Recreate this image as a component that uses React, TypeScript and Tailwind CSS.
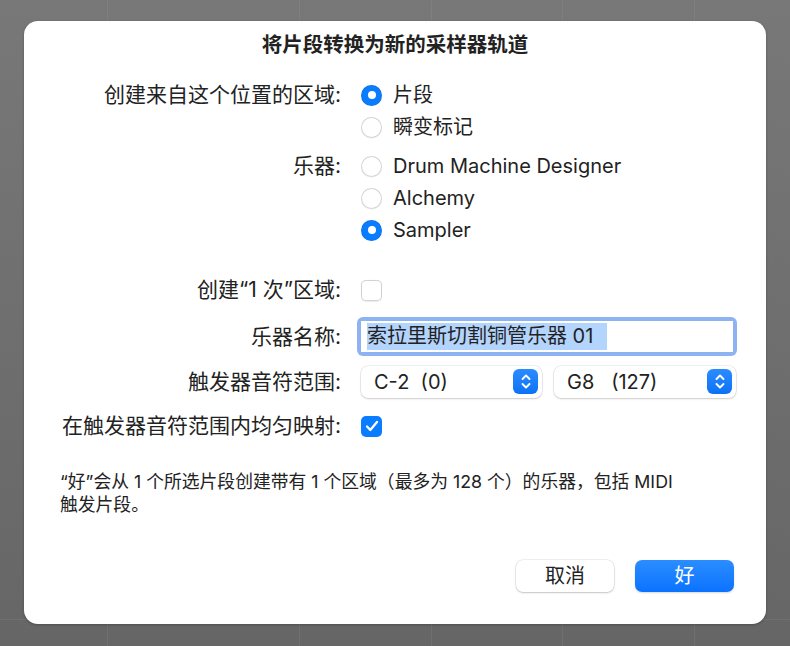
import React from "react";

const font = { fontFamily: '"Inter", "Noto Sans CJK SC", sans-serif' };

function Radio({ checked, label }: { checked?: boolean; label: string }) {
  return (
    <div className="flex h-[32px] items-center">
      {checked ? (
        <span className="flex h-[21px] w-[21px] items-center justify-center rounded-full bg-[#0a7cff] shadow-[inset_0_0_0_0.5px_rgba(0,0,0,0.15)]">
          <span className="h-[8px] w-[8px] rounded-full bg-white" />
        </span>
      ) : (
        <span className="h-[21px] w-[21px] rounded-full bg-white shadow-[inset_0_0_0_1px_#d4d4d4,0_0.5px_1px_rgba(0,0,0,0.08)]" />
      )}
      <span className="ml-[11px] text-[20px] text-[#222]">{label}</span>
    </div>
  );
}

function Label({ children }: { children: React.ReactNode }) {
  return <div className="w-[317px] shrink-0 text-right text-[21px] text-[#222]">{children}</div>;
}

function Stepper() {
  return (
    <span className="flex h-[25px] w-[25px] items-center justify-center rounded-[6px] bg-gradient-to-b from-[#2b8cff] to-[#0a72f5]">
      <svg width="12" height="17" viewBox="0 0 12 17" fill="none" stroke="white" strokeWidth="1.9" strokeLinecap="round" strokeLinejoin="round">
        <path d="M2.5 6 L6 2.5 L9.5 6" />
        <path d="M2.5 11 L6 14.5 L9.5 11" />
      </svg>
    </span>
  );
}

function Popup({ text, width }: { text: React.ReactNode; width: string }) {
  return (
    <div className={`flex h-[32px] ${width} items-center justify-between rounded-[7px] bg-white pl-[13px] pr-[4px] shadow-[0_0_0_0.5px_rgba(0,0,0,0.12),0_1px_2px_rgba(0,0,0,0.15)]`}>
      <span className="whitespace-pre text-[20px] text-[#222]">{text}</span>
      <Stepper />
    </div>
  );
}

export default function App() {
  return (
    <div
      className="relative flex h-[646px] w-[790px] flex-col overflow-hidden bg-gradient-to-b from-[#787878] to-[#666666] pt-[21px] pl-[24px]"
      style={font}
    >
      {/* faint background grid lines */}
      <div className="pointer-events-none absolute inset-0">
        <div className="absolute top-0 bottom-0 left-[107px] w-px bg-white/[0.06]" />
        <div className="absolute top-0 bottom-0 left-[299px] w-px bg-white/[0.06]" />
        <div className="absolute top-0 bottom-0 left-[431px] w-px bg-white/[0.06]" />
        <div className="absolute top-0 bottom-0 left-[562px] w-px bg-white/[0.06]" />
        <div className="absolute top-0 bottom-0 left-[694px] w-px bg-white/[0.06]" />
        <div className="absolute left-0 right-0 top-[619px] h-px bg-white/[0.06]" />
      </div>

      <div className="relative flex h-[603px] w-[742px] flex-col rounded-[14px] bg-white shadow-[0_1px_3px_rgba(0,0,0,0.25)]">
        <div className="pt-[10px] text-center text-[20.5px] font-semibold leading-[28px] text-[#222]">
          将片段转换为新的采样器轨道
        </div>

        <div className="mt-[20px] flex">
          <Label>
            <div className="flex h-[32px] items-center justify-end">创建来自这个位置的区域:</div>
          </Label>
          <div className="ml-[20px] flex flex-col">
            <Radio checked label="片段" />
            <Radio label="瞬变标记" />
          </div>
        </div>

        <div className="mt-[7px] flex">
          <Label>
            <div className="flex h-[32px] items-center justify-end">乐器:</div>
          </Label>
          <div className="ml-[20px] flex flex-col">
            <Radio label="Drum Machine Designer" />
            <Radio label="Alchemy" />
            <Radio checked label="Sampler" />
          </div>
        </div>

        <div className="mt-[28px] flex h-[32px] items-center">
          <Label>创建“1 次”区域:</Label>
          <span className="ml-[20px] h-[21px] w-[21px] rounded-[5px] bg-white shadow-[inset_0_0_0_1px_#d2d2d2,0_0.5px_1px_rgba(0,0,0,0.08)]" />
        </div>

        <div className="mt-[11px] flex h-[39px] items-center">
          <Label>乐器名称:</Label>
          <div className="ml-[16px] flex h-[39px] w-[380px] items-center rounded-[6px] bg-[#8db3f3] p-[4px]">
            <div className="flex h-full w-full items-center bg-white pl-[6px]">
              <span className="bg-[#b3d4fd] pr-[14px] text-[20px] leading-[27px] text-[#222]">
                索拉里斯切割铜管乐器 01
              </span>
            </div>
          </div>
        </div>

        <div className="mt-[9px] flex h-[33px] items-center">
          <Label>触发器音符范围:</Label>
          <div className="ml-[20px] flex gap-[12px]">
            <Popup text={"C-2  (0)"} width="w-[181px]" />
            <Popup text={"G8   (127)"} width="w-[182px]" />
          </div>
        </div>

        <div className="mt-[12px] flex h-[32px] items-center">
          <Label>在触发器音符范围内均匀映射:</Label>
          <span className="ml-[20px] flex h-[21px] w-[21px] items-center justify-center rounded-[5px] bg-[#0a7cff]">
            <svg width="14" height="12" viewBox="0 0 14 12" fill="none" stroke="white" strokeWidth="2.3" strokeLinecap="round" strokeLinejoin="round">
              <path d="M2 6.5 L5.3 10 L12 2" />
            </svg>
          </span>
        </div>

        <div className="mt-[28px] pl-[36px] pr-[40px] text-[17.8px] leading-[23px] text-[#222]">
          “好”会从 1 个所选片段创建带有 1 个区域（最多为 128 个）的乐器，包括 MIDI
          <br />
          触发片段。
        </div>

        <div className="mt-[44px] flex justify-end gap-[21px] pr-[32px]">
          <button className="flex h-[32px] w-[98px] items-center justify-center rounded-[7px] bg-white text-[20px] text-[#222] shadow-[0_0_0_0.5px_rgba(0,0,0,0.12),0_1px_2px_rgba(0,0,0,0.18)]">
            取消
          </button>
          <button className="flex h-[32px] w-[99px] items-center justify-center rounded-[7px] bg-gradient-to-b from-[#2a8dff] to-[#0a72ff] text-[20px] text-white shadow-[0_1px_2px_rgba(0,0,0,0.15)]">
            好
          </button>
        </div>
      </div>
    </div>
  );
}
